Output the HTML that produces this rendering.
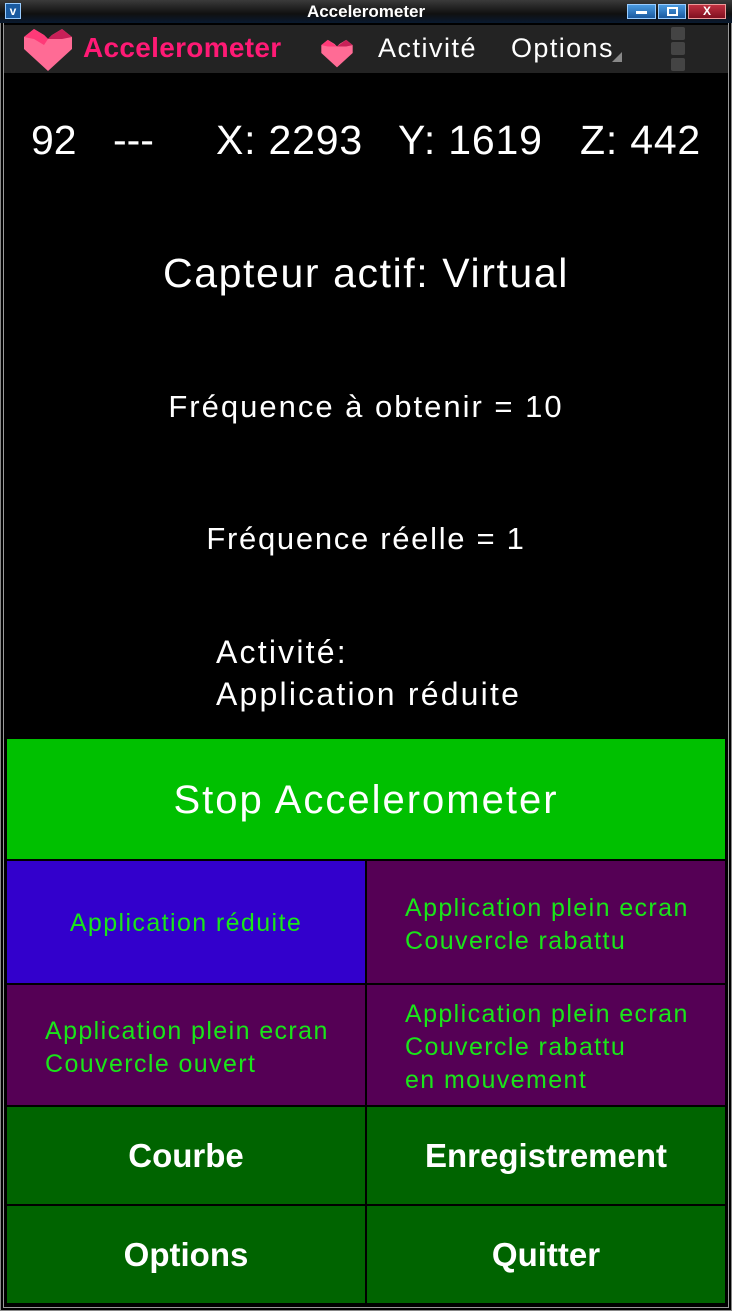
<!DOCTYPE html>
<html><head><meta charset="utf-8"><style>
*{margin:0;padding:0;box-sizing:border-box}
body{width:732px;height:1311px;background:#000;font-family:"Liberation Sans",sans-serif;position:relative;overflow:hidden}
.abs{position:absolute}
.frame{left:0;top:0;width:732px;height:1311px;border:1px solid #888;box-shadow:inset 0 0 0 2px #000,inset 0 0 0 3px #999,inset 0 0 0 6px #000}
.title{left:0;top:0;width:732px;height:23px;background:linear-gradient(#3a3a3a,#101010 60%,#0a1a30);color:#fff;font-size:17px;text-align:center;line-height:24px;font-weight:bold}
.wb{top:4px;height:15px;border:1px solid #9cf;background:linear-gradient(#4a9ae0,#1a5aa0)}
.appbar{left:4px;top:25px;width:724px;height:48px;background:#232323}
.t{color:#fff;position:absolute;white-space:nowrap}
.cell{position:absolute;color:#19e619;font-size:25px;line-height:33px;letter-spacing:1.4px}
.g{position:absolute;background:#006400;color:#fff;font-weight:bold;font-size:33px;display:flex;align-items:center;justify-content:center}
</style></head><body>
<div class="abs frame"></div>
<div class="abs title">Accelerometer</div>
<div class="abs" style="left:5px;top:3px;width:16px;height:16px;border:1px solid #9cf;background:#1a5aa0;color:#fff;font-size:12px;line-height:14px;text-align:center;font-weight:bold">v</div>
<div class="abs wb" style="left:627px;width:29px"><div style="margin:6px auto 0;width:11px;height:3px;background:#fff"></div></div>
<div class="abs wb" style="left:658px;width:28px"><div style="margin:2px auto 0;width:11px;height:9px;border:2px solid #fff"></div></div>
<div class="abs wb" style="left:688px;width:38px;border-color:#e99;background:linear-gradient(#c03040,#801020);color:#fff;font-size:12px;text-align:center;line-height:13px;font-weight:bold">X</div>
<div class="abs appbar"></div>
<svg class="abs" style="left:22px;top:27px" width="52" height="44" viewBox="0 0 52 44"><path d="M2 10 L12 2 L22 8 L26 12 L30 8 L40 2 L50 10 L50 22 L26 44 L2 22Z" fill="#ff6b95"/><path d="M2 10 L12 2 L22 8 L26 12 L22 18 L12 12Z" fill="#ff3a78"/><path d="M50 10 L40 2 L30 8 L26 12 L40 12Z" fill="#c82058"/></svg>
<div class="t" style="left:83px;top:32px;font-size:28px;font-weight:bold;color:#ff1a75;letter-spacing:0.3px">Accelerometer</div>
<svg class="abs" style="left:320px;top:38px" width="34" height="30" viewBox="0 0 52 44"><path d="M2 10 L12 2 L22 8 L26 12 L30 8 L40 2 L50 10 L50 22 L26 44 L2 22Z" fill="#ff6b95"/><path d="M2 10 L12 2 L26 12 L12 12Z" fill="#ff3a78"/><path d="M50 10 L40 2 L26 12 L40 12Z" fill="#c82058"/></svg>
<div class="t" style="left:378px;top:33px;font-size:27px;letter-spacing:1.5px">Activité</div>
<div class="t" style="left:511px;top:33px;font-size:27px;letter-spacing:1.4px">Options</div>
<div class="abs" style="left:612px;top:52px;width:0;height:0;border-left:10px solid transparent;border-bottom:10px solid #888"></div>
<div class="abs" style="left:671px;top:27px;width:14px;height:13px;background:#444;border-radius:2px"></div>
<div class="abs" style="left:671px;top:42px;width:14px;height:13px;background:#444;border-radius:2px"></div>
<div class="abs" style="left:671px;top:58px;width:14px;height:13px;background:#444;border-radius:2px"></div>

<div class="t" style="left:31px;top:117px;font-size:41px">92</div>
<div class="t" style="left:113px;top:117px;font-size:41px">---</div>
<div class="t" style="left:216px;top:117px;font-size:41px;letter-spacing:0.8px">X: 2293</div>
<div class="t" style="left:398px;top:117px;font-size:41px;letter-spacing:0.8px">Y: 1619</div>
<div class="t" style="left:580px;top:117px;font-size:41px;letter-spacing:0.8px">Z: 442</div>
<div class="t" style="left:0;width:732px;text-align:center;top:250px;font-size:41px;letter-spacing:1.6px">Capteur actif: Virtual</div>
<div class="t" style="left:0;width:732px;text-align:center;top:389px;font-size:31px;letter-spacing:2px">Fréquence à obtenir = 10</div>
<div class="t" style="left:0;width:732px;text-align:center;top:521px;font-size:31px;letter-spacing:1.7px">Fréquence réelle = 1</div>
<div class="t" style="left:216px;top:631px;font-size:32px;line-height:42px;letter-spacing:2.2px">Activité:<br>Application réduite</div>

<div class="abs" style="left:7px;top:739px;width:718px;height:120px;background:#00c000;color:#fff;font-size:40px;letter-spacing:2px;display:flex;align-items:center;justify-content:center;padding-top:2px">Stop Accelerometer</div>
<div class="cell" style="left:7px;top:861px;width:358px;height:122px;background:#3300cc;display:flex;align-items:center;justify-content:center;padding-top:2px">Application réduite</div>
<div class="cell" style="left:367px;top:861px;width:358px;height:122px;background:#550055;padding:31px 0 0 38px">Application plein ecran<br>Couvercle rabattu</div>
<div class="cell" style="left:7px;top:985px;width:358px;height:120px;background:#550055;padding:30px 0 0 38px">Application plein ecran<br>Couvercle ouvert</div>
<div class="cell" style="left:367px;top:985px;width:358px;height:120px;background:#550055;padding:13px 0 0 38px">Application plein ecran<br>Couvercle rabattu<br>en mouvement</div>
<div class="g" style="left:7px;top:1107px;width:358px;height:97px">Courbe</div>
<div class="g" style="left:367px;top:1107px;width:358px;height:97px">Enregistrement</div>
<div class="g" style="left:7px;top:1206px;width:358px;height:97px">Options</div>
<div class="g" style="left:367px;top:1206px;width:358px;height:97px">Quitter</div>
</body></html>
